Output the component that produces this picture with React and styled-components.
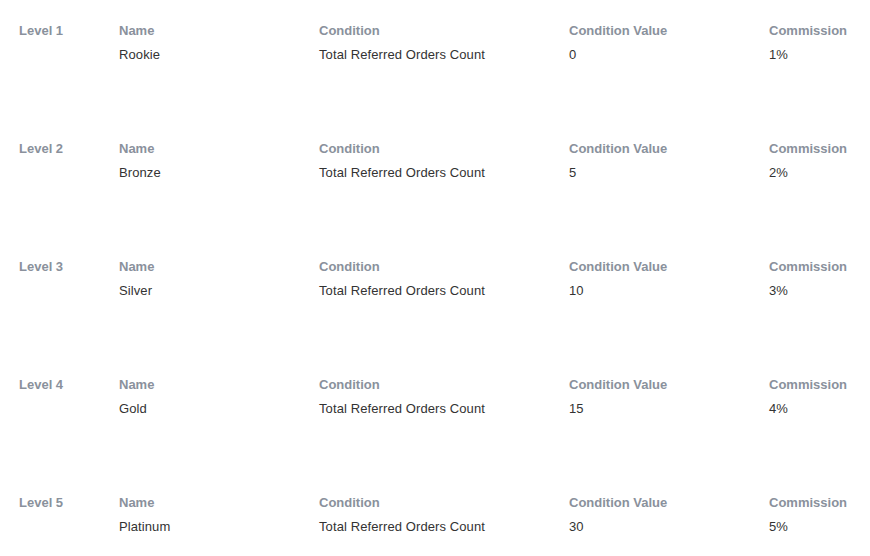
import React from "react";
import styled, { createGlobalStyle } from "styled-components";

const Global = createGlobalStyle`
  html, body { margin: 0; padding: 0; background: #fff; }
  body { font-family: "Liberation Sans", Arial, sans-serif; }
`;

const List = styled.div`
  display: flex;
  flex-direction: column;
  width: 870px;
`;

const Row = styled.div`
  display: grid;
  grid-template-columns: 100px 200px 250px 200px 1fr;
  box-sizing: border-box;
  height: 118px;
  padding: 23px 0 0 19px;

  &:last-child {
    height: auto;
  }
`;

const Field = styled.div`
  display: flex;
  flex-direction: column;
  gap: 8px;
`;

const Label = styled.div`
  font-size: 13px;
  line-height: 16px;
  font-weight: 700;
  color: #8a919c;
`;

const Value = styled.div`
  font-size: 13px;
  line-height: 16px;
  color: #333;
  letter-spacing: 0.1px;
`;

const levels = [
  { name: "Rookie", value: "0", commission: "1%" },
  { name: "Bronze", value: "5", commission: "2%" },
  { name: "Silver", value: "10", commission: "3%" },
  { name: "Gold", value: "15", commission: "4%" },
  { name: "Platinum", value: "30", commission: "5%" },
];

export default function App() {
  return (
    <>
      <Global />
      <List>
        {levels.map((l, i) => (
          <Row key={i}>
            <Label>Level {i + 1}</Label>
            <Field>
              <Label>Name</Label>
              <Value>{l.name}</Value>
            </Field>
            <Field>
              <Label>Condition</Label>
              <Value>Total Referred Orders Count</Value>
            </Field>
            <Field>
              <Label>Condition Value</Label>
              <Value>{l.value}</Value>
            </Field>
            <Field>
              <Label>Commission</Label>
              <Value>{l.commission}</Value>
            </Field>
          </Row>
        ))}
      </List>
    </>
  );
}
